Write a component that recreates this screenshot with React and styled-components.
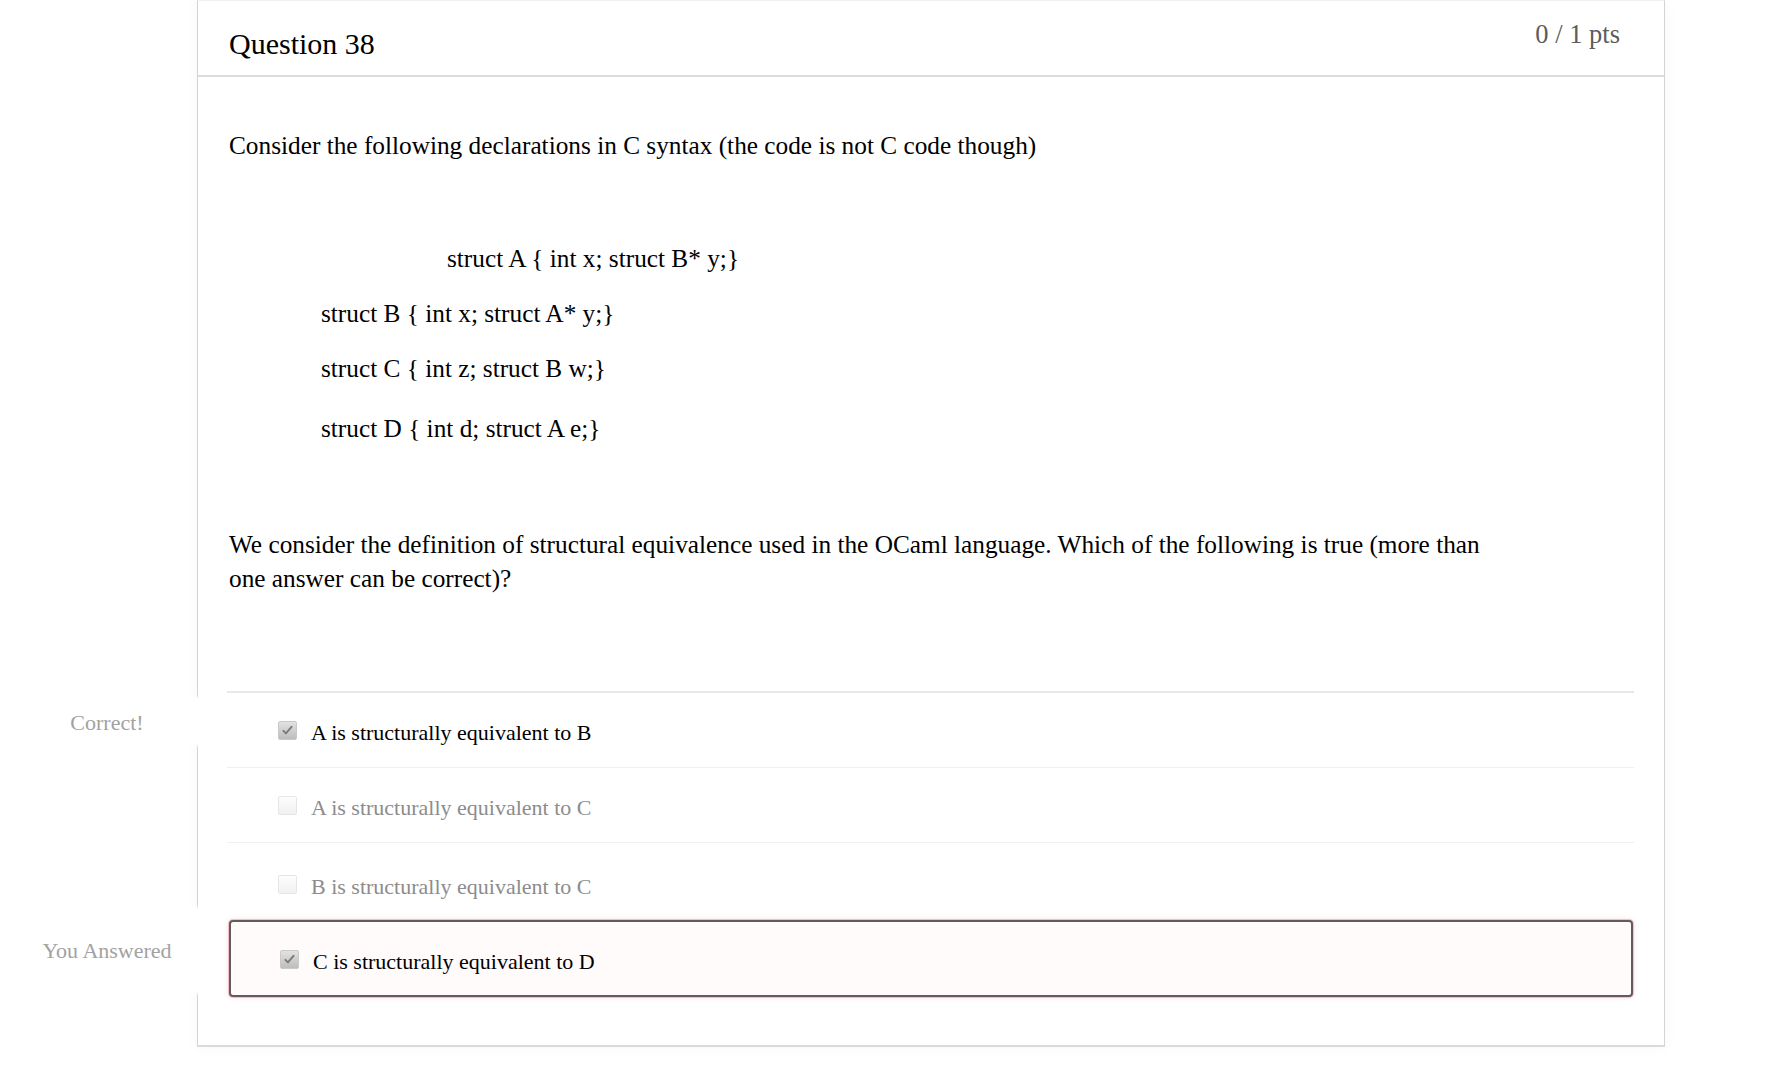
import React from 'react';
import styled, { createGlobalStyle } from 'styled-components';

const GlobalStyle = createGlobalStyle`
  html, body { margin: 0; padding: 0; background: #fff; }
  body { font-family: "Liberation Serif", "Times New Roman", serif; color: #000; }
  * { box-sizing: border-box; }
`;

const Page = styled.div`
  width: 1774px;
  height: 1080px;
  overflow: hidden;
  background: #fff;
  padding-left: 197px;
`;

const Card = styled.section`
  width: 1468px;
  border: 1px solid #d4d4d4;
  border-top-color: #f2f2f2;
  border-bottom: 2px solid #dadada;
  box-shadow: 0 0 14px rgba(0, 0, 0, 0.035);
  background: #fff;
`;

const Header = styled.header`
  display: flex;
  justify-content: space-between;
  align-items: flex-start;
  height: 76px;
  padding: 0 44px 0 31px;
  border-bottom: 2px solid #dcdcdc;
`;

const Title = styled.h2`
  margin: 28px 0 0;
  font-size: 30px;
  line-height: 30px;
  font-weight: normal;
  color: #000;
`;

const Points = styled.div`
  margin-top: 20px;
  font-size: 26.5px;
  line-height: 26px;
  color: #5c5c5c;
`;

const Body = styled.div`
  padding: 0 31px 48px 31px;
  font-size: 25.3px;
`;

const Paragraph = styled.p`
  margin: ${(p) => p.$gap}px 0 0;
  line-height: ${(p) => p.$lh}px;
`;

const CodeLine = styled.p`
  margin: ${(p) => p.$gap}px 0 0 ${(p) => p.$indent}px;
  line-height: 35px;
  white-space: nowrap;
`;

const Answers = styled.div`
  margin: 96px -1px 0 -2px;
`;

const Row = styled.div`
  position: relative;
  display: flex;
  align-items: flex-start;
  padding: ${(p) => p.$pt ?? 25}px 0 ${(p) => p.$pb ?? 19}px 51px;
  border-top: ${(p) => (p.$first ? '2px solid #e8e8e8' : '1px solid #f0f0f0')};
  font-size: 22px;
  line-height: 30px;
  color: ${(p) => (p.$muted ? '#8c8c8c' : '#000')};
`;

const SelectedBox = styled.div`
  position: relative;
  display: flex;
  align-items: flex-start;
  margin: 3px 1px 0 2px;
  padding: 25px 0 18px 49px;
  border: 2px solid #675a5e;
  border-radius: 4px;
  box-shadow: 0 0 0 1px rgba(230, 150, 160, 0.5), 0 0 5px rgba(235, 160, 170, 0.45);
  background: #fffbfb;
  font-size: 22px;
  line-height: 30px;
  color: #000;
`;

const Box = styled.span`
  flex: none;
  width: 19px;
  height: 19px;
  margin: 3px 14px 0 0;
  border-radius: 2px;
  display: flex;
  align-items: center;
  justify-content: center;
  border: 1px solid ${(p) => (p.$checked ? '#c9c9c9' : '#e6e6e6')};
  background: ${(p) =>
    p.$checked ? 'linear-gradient(#e2e2e2, #bdbdbd)' : 'linear-gradient(#fdfdfd, #f1f1f1)'};
`;

const Label = styled.div`
  position: absolute;
  left: ${(p) => p.$left}px;
  top: ${(p) => p.$top}px;
  width: 214px;
  text-align: center;
  font-size: 22px;
  line-height: 30px;
  color: #a2a2a2;
  white-space: nowrap;
`;

const BorderGap = styled.div`
  position: absolute;
  left: ${(p) => p.$left}px;
  top: ${(p) => p.$top}px;
  width: 14px;
  height: ${(p) => p.$h}px;
  background: #fff;
  box-shadow: 0 0 3px 2px #fff;
`;

const Check = () => (
  <svg width="13" height="13" viewBox="0 0 16 16">
    <path d="M3 8.5l3 3 7-8" fill="none" stroke="#7a7a7a" strokeWidth="2.4" strokeLinecap="round" strokeLinejoin="round" />
  </svg>
);

export default function App() {
  return (
    <>
      <GlobalStyle />
      <Page>
        <Card>
          <Header>
            <Title>Question 38</Title>
            <Points>0 / 1 pts</Points>
          </Header>
          <Body>
            <Paragraph $gap={51} $lh={35}>
              Consider the following declarations in C syntax (the code is not C code though)
            </Paragraph>
            <CodeLine $gap={78} $indent={218}>struct A {'{'} int x; struct B* y;{'}'}</CodeLine>
            <CodeLine $gap={20} $indent={92}>struct B {'{'} int x; struct A* y;{'}'}</CodeLine>
            <CodeLine $gap={20} $indent={92}>struct C {'{'} int z; struct B w;{'}'}</CodeLine>
            <CodeLine $gap={25} $indent={92}>struct D {'{'} int d; struct A e;{'}'}</CodeLine>
            <Paragraph $gap={81} $lh={34}>
              We consider the definition of structural equivalence used in the OCaml language. Which of the following is true (more than
              <br />
              one answer can be correct)?
            </Paragraph>
            <Answers>
              <Row $first>
                <BorderGap $left={-37} $top={6} $h={45} />
                <Label $left={-227} $top={15}>Correct!</Label>
                <Box $checked><Check /></Box>
                <span>A is structurally equivalent to B</span>
              </Row>
              <Row $muted>
                <Box />
                <span>A is structurally equivalent to C</span>
              </Row>
              <Row $muted $pt={29} $pb={15}>
                <Box />
                <span>B is structurally equivalent to C</span>
              </Row>
              <SelectedBox>
                <BorderGap $left={-42} $top={-13} $h={83} />
                <Label $left={-231} $top={14}>You Answered</Label>
                <Box $checked><Check /></Box>
                <span>C is structurally equivalent to D</span>
              </SelectedBox>
            </Answers>
          </Body>
        </Card>
      </Page>
    </>
  );
}
